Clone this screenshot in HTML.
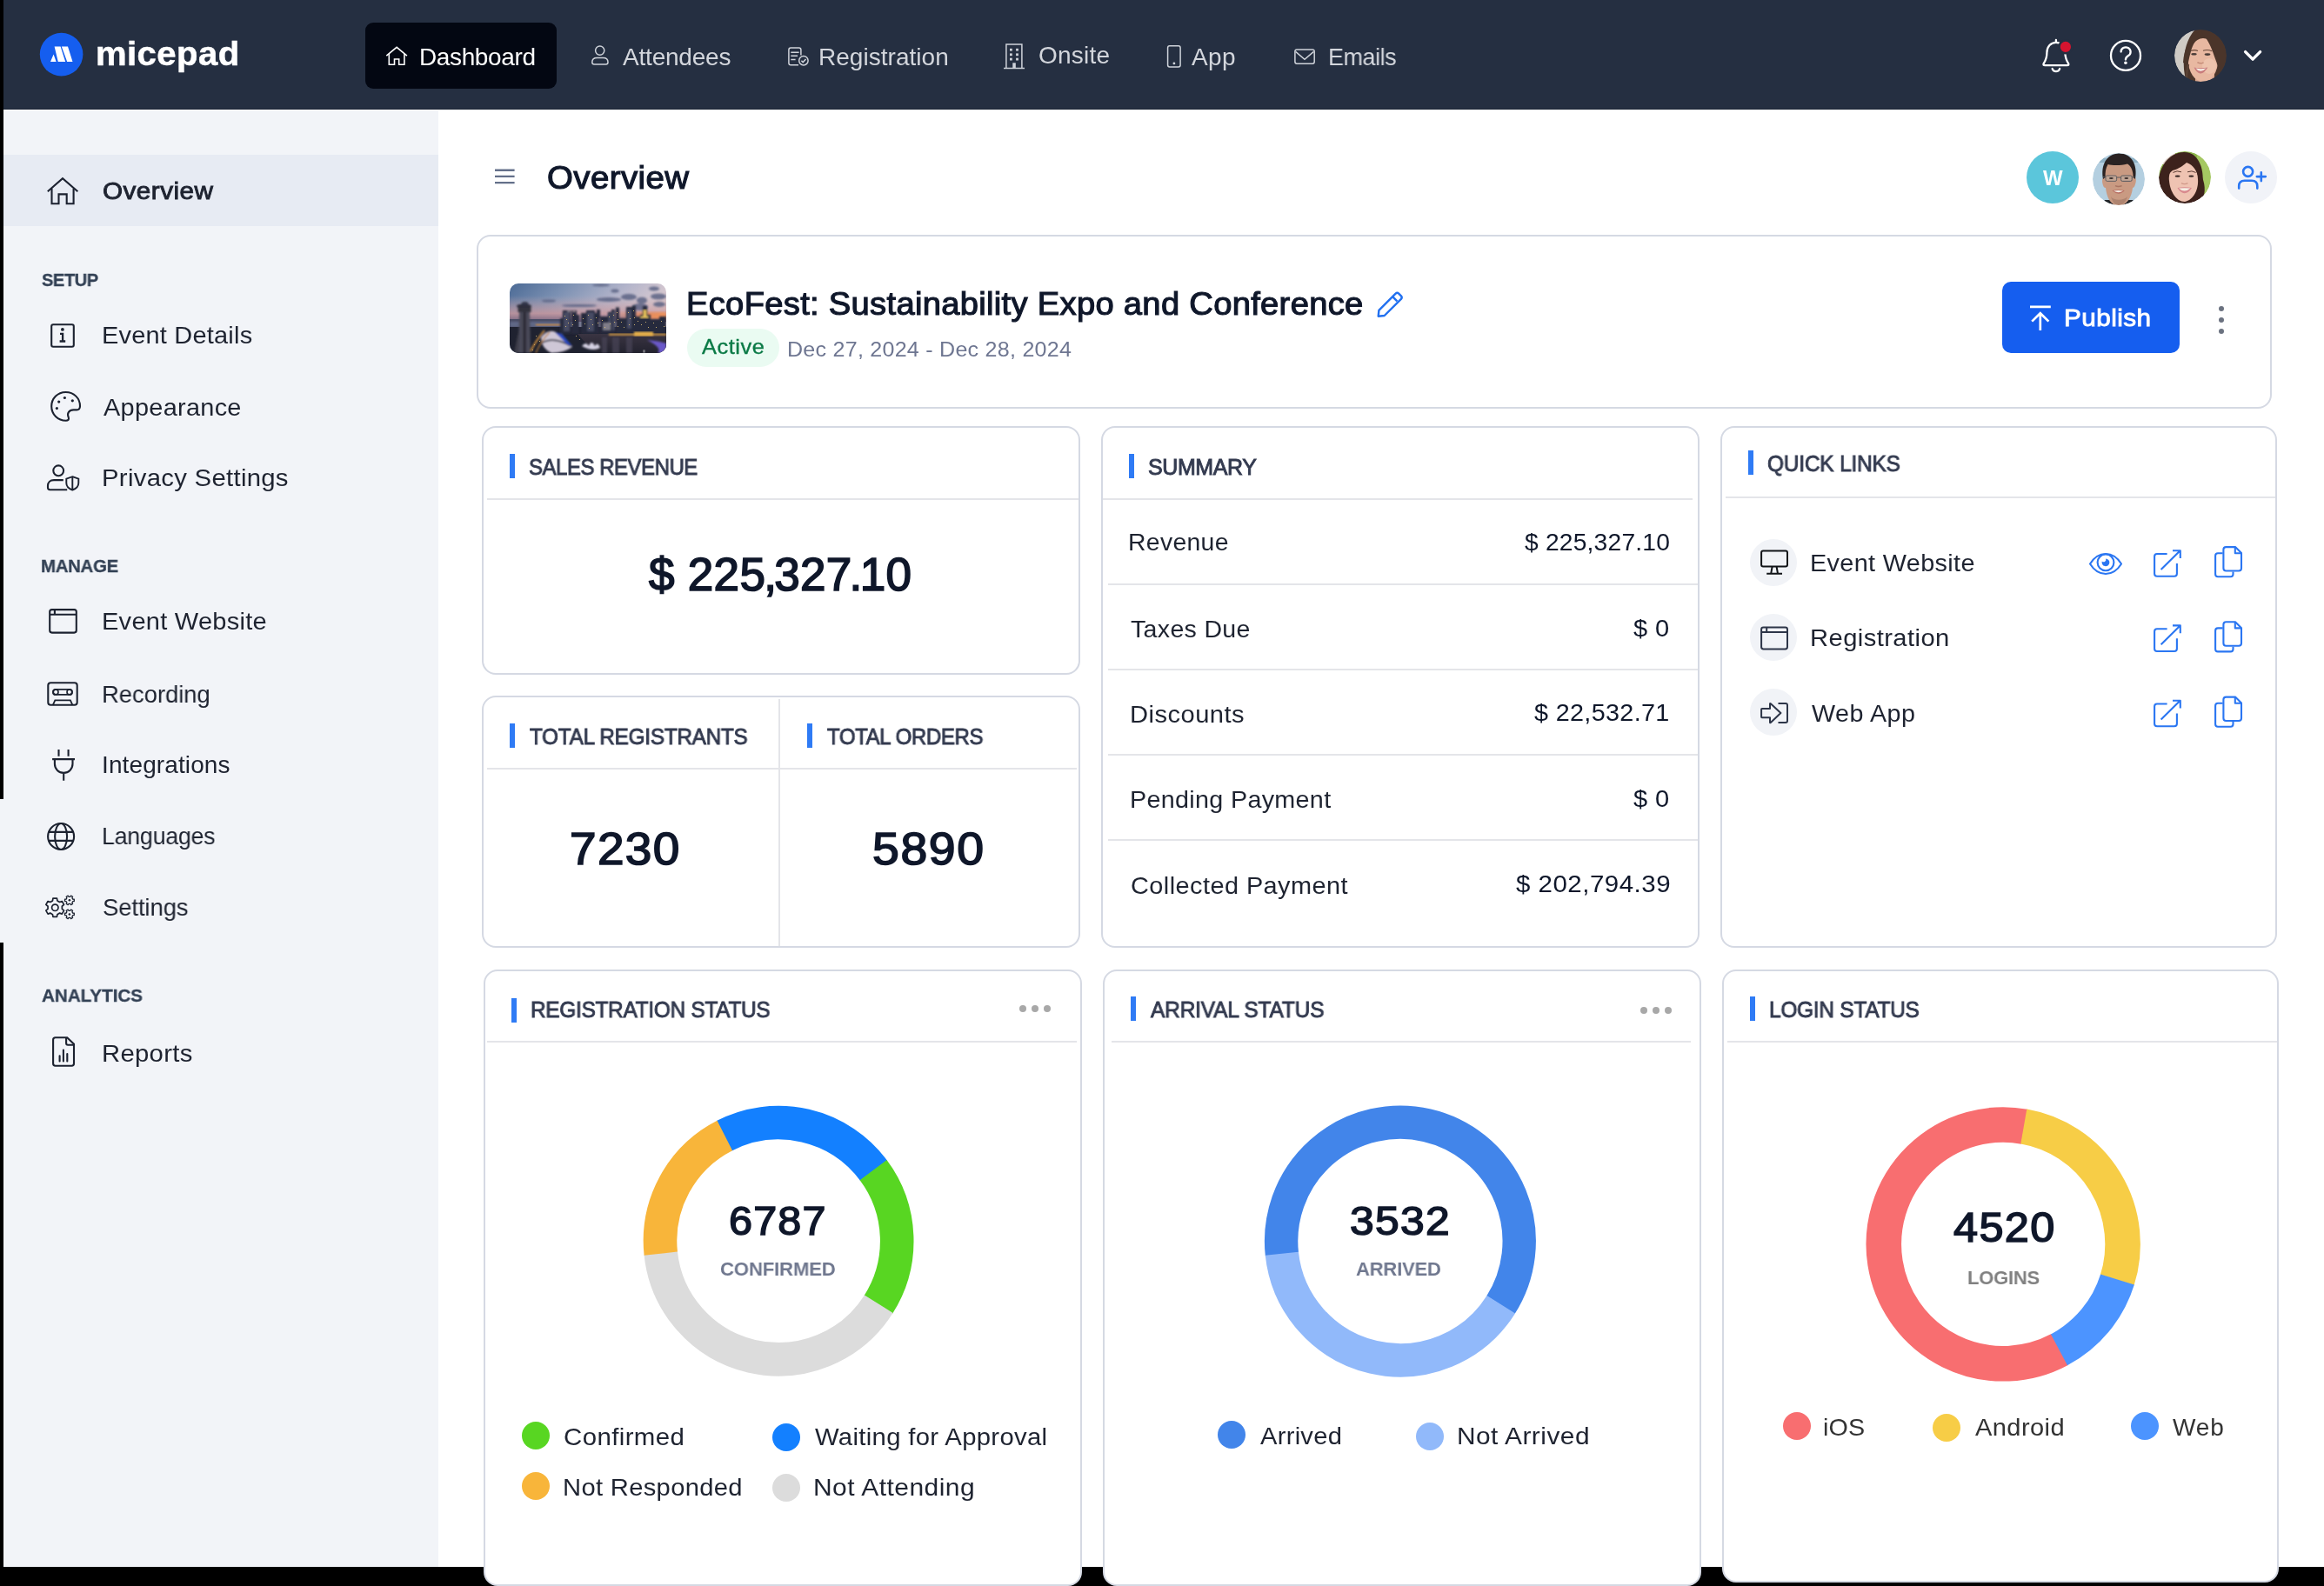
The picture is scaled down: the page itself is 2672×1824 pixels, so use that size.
<!DOCTYPE html>
<html lang="en"><head><meta charset="utf-8">
<title>Micepad - Overview</title>
<style>

html,body{margin:0;padding:0;background:#000;}
body{width:2672px;height:1824px;font-family:"Liberation Sans",sans-serif;}
#page{position:relative;width:2672px;height:1824px;overflow:hidden;background:#000;}
#page header,#page aside,#page main{position:absolute;left:0;top:0;width:2672px;height:1824px;display:block;}
#page div,#page span,#page svg{position:absolute;box-sizing:border-box;}
.t{white-space:nowrap;line-height:1;display:block;font-family:"Liberation Sans",sans-serif;will-change:transform;}
#page .t span{position:static;}
.card{background:#fff;border:2px solid #d5d9e3;border-radius:16px;}
.hr{background:#e4e5e9;height:2px;}
.vr{background:#e4e5e9;width:2px;}
.bar{background:#2f7bf5;width:6px;height:28px;}
.dot{border-radius:50%;width:32px;height:32px;}
.md{border-radius:50%;width:8px;height:8px;background:#a8a8a8;}
.kd{border-radius:50%;width:6px;height:6px;background:#6b7280;}
.qc{border-radius:50%;width:54px;height:54px;background:#f1f3f7;}
</style></head>
<body>
<div id="page">
<!-- page surfaces -->
<div style="left:4px;top:0px;width:2668px;height:1802px;background:#fff;"></div>
<div style="left:4px;top:127px;width:500px;height:1675px;background:#f2f4f8;"></div>
<div style="left:0px;top:919px;width:4px;height:165px;background:#f2f4f8;"></div>
<header>
<div style="left:4px;top:0px;width:2668px;height:126px;background:#252f41;border-bottom:1px solid #1a2334;"></div>
<div style="left:420px;top:26px;width:220px;height:76px;background:#030712;border-radius:9px;"></div>
<svg width="2672" height="1824" viewBox="0 0 2672 1824" style="left:0;top:0" aria-label="icons">
<g id="logo"><circle cx="70.6" cy="62.6" r="24.8" fill="#155eef"/>
<path d="M58,71.1 L61.6,62.4 L64.6,71.1 Z M62.6,53.4 H69.6 L75.2,71.1 H66.8 Z M70.8,53.4 H78 L83.5,71.1 H77.2 Z" fill="#fff"/></g>
<g fill="none" stroke="#fff" stroke-width="1.6">
<path d="M444.3,64.2 L456.1,54.4 L467.9,64.2"/><path d="M447.3,62 V74.2 H453.5 V68 H458.7 V74.2 H464.9 V62"/></g>
<g fill="none" stroke="#cfd3da" stroke-width="1.5">
<circle cx="689.7" cy="58.1" r="5.1"/>
<path d="M680.8,71.6 Q680.8,66.4 686.4,66.4 H693.4 Q699,66.4 699,71.6 Q699,74.1 696.6,74.1 H683.2 Q680.8,74.1 680.8,71.6 Z"/>
<path d="M918,74.7 H909.2 Q906.9,74.7 906.9,72.4 V57.3 Q906.9,55 909.2,55 H918.6 Q920.9,55 920.9,57.3 V63.6"/>
<path d="M909.3,60.2 H918.6 M909.3,64.3 H917 M909.3,68.4 H914.6"/>
<circle cx="923.9" cy="69.7" r="5.2"/><path d="M921.4,69.8 L923.2,71.6 L926.5,68"/>
<path d="M1156.9,78.4 V51 H1174.9 V78.4 M1154,78.6 H1178"/>
</g>
<g fill="#cfd3da">
<rect x="1161.0" y="55.8" width="2.8" height="2.8"/>
<rect x="1161.0" y="61.4" width="2.8" height="2.8"/>
<rect x="1161.0" y="66.7" width="2.8" height="2.8"/>
<rect x="1168.1" y="55.8" width="2.8" height="2.8"/>
<rect x="1168.1" y="61.4" width="2.8" height="2.8"/>
<rect x="1168.1" y="66.7" width="2.8" height="2.8"/>
<rect x="1164.3" y="72.3" width="3.5" height="6"/>
<circle cx="1349.9" cy="72.9" r="1.4"/></g>
<g fill="none" stroke="#cfd3da" stroke-width="1.5">
<rect x="1342.6" y="52.8" width="14.5" height="24.2" rx="2.2"/>
<rect x="1488.9" y="56.9" width="22.3" height="16.3" rx="2.2"/><path d="M1489.6,59.4 L1500,68.2 L1510.4,59.4"/>
</g>
<g fill="none" stroke="#fff" stroke-width="2.3" stroke-linecap="round" stroke-linejoin="round">
<path d="M2363.9,46 V48.6"/>
<path d="M2351.2,75.2 Q2348.6,75.2 2349.8,72.9 C2352.6,68.5 2353.4,66 2353.4,60.5 C2353.4,53.4 2358,48.8 2363.9,48.8 C2369.8,48.8 2374.4,53.4 2374.4,60.5 C2374.4,66 2375.2,68.5 2378,72.9 Q2379.2,75.2 2376.6,75.2 Z"/>
<path d="M2359.6,79 A4.5,4.5 0 0 0 2368.2,79"/>
<circle cx="2444" cy="63.9" r="17"/>
<path d="M2438.6,59.6 A5.5,5.2 0 1 1 2447,64 C2445,65.3 2443.9,66.4 2443.9,68.6"/>
</g>
<circle cx="2374.9" cy="53.9" r="7.4" fill="#d6142f" stroke="#252f41" stroke-width="2.6"/>
<circle cx="2443.9" cy="72.3" r="1.8" fill="#fff"/>
<path d="M2581.6,59.6 L2590.1,68.1 L2598.6,59.6" fill="none" stroke="#fff" stroke-width="3.4" stroke-linecap="round" stroke-linejoin="round"/>
</svg>
<svg width="60" height="60" viewBox="0 0 60 60" style="left:2499.9px;top:34.0px;border-radius:50%;overflow:hidden" aria-label="avatar u"><defs><filter id="fu" x="-20%" y="-20%" width="140%" height="140%"><feGaussianBlur stdDeviation="0.55"/></filter><clipPath id="cu"><circle cx="30" cy="30" r="30"/></clipPath></defs><g clip-path="url(#cu)"><g filter="url(#fu)"><rect x="-5" y="-5" width="70" height="70" fill="#cfcbc5"/><path d="M28,-4 C18,4 12,18 11,34 C10,46 12,56 16,66 L66,66 L66,-4 Z" fill="#4b362b"/><rect x="24" y="48" width="22" height="20" fill="#d9a78f"/><ellipse cx="33" cy="35" rx="17.2" ry="25" fill="#e8b8a1"/><ellipse cx="40" cy="42" rx="8" ry="9" fill="#f0c7b2" opacity="0.7"/><path d="M33,6 C26,9 21,16 18.5,27 C17,32 16.5,36 15,41 L10,38 C11,22 18,8 30,1 Z" fill="#4b362b"/><path d="M33,6 C39,12 43,22 46,31 C48.5,38 50.5,42 50.5,48 C50,54 47,59 43,64 L66,66 L66,-4 L28,-4 Z" fill="#4b362b"/><path d="M16,40 C14,48 13,56 15,64" stroke="#5a4234" stroke-width="2.4" fill="none"/><ellipse cx="22.5" cy="28.3" rx="3.2" ry="1.3" fill="#4a3c38"/><ellipse cx="38" cy="28.6" rx="3.4" ry="1.3" fill="#4a3c38"/><path d="M18.6,24.6 Q23,22.8 27,24.4" stroke="#6a4a3c" stroke-width="1.1" fill="none"/><path d="M33,24.2 Q38,22.4 43.4,24.8" stroke="#6a4a3c" stroke-width="1.1" fill="none"/><path d="M26.4,37.6 Q30,39.8 33.6,37.8" stroke="#c48c78" stroke-width="1.5" fill="none"/><path d="M22.6,43.4 Q30,45 38.4,43.6 Q34,51 29.5,50.4 Q25.4,49.8 22.6,43.4 Z" fill="#c97c7c"/><path d="M24.4,44.4 Q30,45.8 36.6,44.6 Q33,48 30,47.8 Q27,47.6 24.4,44.4 Z" fill="#f6efe8"/></g></g></svg>
<span class="t" style="left:110.00px;top:42.19px;font-size:39px;font-weight:700;color:#ffffff;letter-spacing:0.422px;-webkit-text-stroke:0.5px #ffffff;transform:scale(1.0270,1.0000);transform-origin:0 33.01px;">micepad</span>
<span class="t" style="left:482.00px;top:51.60px;font-size:28px;font-weight:400;color:#ffffff;letter-spacing:-0.373px;">Dashboard</span>
<span class="t" style="left:715.80px;top:51.60px;font-size:28px;font-weight:400;color:#d3d6dc;letter-spacing:-0.202px;">Attendees</span>
<span class="t" style="left:940.80px;top:51.60px;font-size:28px;font-weight:400;color:#d3d6dc;letter-spacing:0.036px;">Registration</span>
<span class="t" style="left:1193.60px;top:50.10px;font-size:28px;font-weight:400;color:#d3d6dc;letter-spacing:0.240px;">Onsite</span>
<span class="t" style="left:1370.20px;top:51.60px;font-size:28px;font-weight:400;color:#d3d6dc;letter-spacing:0.400px;">App</span>
<span class="t" style="left:1527.00px;top:51.60px;font-size:28px;font-weight:400;color:#d3d6dc;letter-spacing:-0.456px;transform:scale(0.9615,1.0000);transform-origin:0 23.70px;">Emails</span>
</header>
<aside>
<div style="left:4px;top:178px;width:500px;height:82px;background:#e7ebf3;"></div>
<svg width="2672" height="1824" viewBox="0 0 2672 1824" style="left:0;top:0" aria-label="sidebar icons">
<g fill="none" stroke="#1c2230" stroke-width="2.1">
<path d="M54.8,220.2 L72,205.2 L89.4,220.2"/><path d="M59.5,217 V234.2 H67.5 V223.4 H76.7 V234.2 H84.6 V217"/>
<rect x="59.2" y="373.2" width="25.6" height="25.6" rx="2"/>
<path d="M69,383.9 H72.1 V392.5 M68.6,392.5 H75.2" stroke-width="2.3"/>
<path d="M75.6,451 C66,451 59.2,458.4 59.2,467.3 C59.2,476.6 66.5,483.8 75.8,483.8 C78.4,483.8 79.6,482.2 78.8,480.2 C77.8,477.8 77.4,476.2 78.8,474.2 C80.2,472.2 82,471.4 84.6,471.4 H88.2 C90.8,471.4 92,469.8 92,467 C92,458 85,451 75.6,451 Z"/>
<circle cx="67.2" cy="541.3" r="5.9"/>
<path d="M72.8,552.1 H62 C57.6,552.1 55,554.8 55,558.6 V560.8 C55,562.4 55.8,563.2 57.4,563.2 H77.2"/>
<path d="M83.3,548.2 L90.3,550.7 V555.4 C90.3,559.4 87.6,561.9 83.3,563.5 C79,561.9 76.3,559.4 76.3,555.4 V550.7 Z M83.3,548.2 V563.5" stroke-width="1.9"/>
<rect x="57.2" y="701.1" width="30.6" height="26.5" rx="2.5"/><path d="M57.2,706.8 H87.8 M62.9,701.1 V706.8"/>
<rect x="55.3" y="785.3" width="33.4" height="25.5" rx="3"/>
<rect x="61" y="792.9" width="22" height="6" rx="3" stroke-width="1.9"/>
<path d="M60.8,810.8 L63.3,805.3 H80.9 L83.4,810.8" stroke-width="1.8"/>
<path d="M67.5,862 V869.8 M78.6,862 V869.8 M60.1,873.1 H86 M62.9,873.1 V878.6 A10.3,10.3 0 0 0 83.5,878.6 V873.1 M73.2,889 V897.8"/>
<circle cx="70.1" cy="962" r="15"/><ellipse cx="70.1" cy="962" rx="7" ry="15"/><path d="M56,956.9 H84.2 M56,966.9 H84.2"/>
<path d="M77.2,1193.2 H63.7 Q61.1,1193.2 61.1,1195.8 V1223 Q61.1,1225.7 63.7,1225.7 H82.4 Q85,1225.7 85,1223 V1200.8 Z"/>
<path d="M76.1,1193.2 V1199.8 Q76.1,1201.8 78.1,1201.8 H85"/>
<path d="M68.6,1214.2 V1220.4 M72.9,1207.6 V1220.4 M77.3,1212 V1220.4" stroke-linecap="round"/>
</g>
<g fill="none" stroke="#1c2230" stroke-linejoin="round">
<path d="M60.47,1035.96 L60.93,1033.14 L65.47,1033.14 L65.93,1035.96 L68.62,1037.52 L71.30,1036.51 L73.57,1040.43 L71.35,1042.24 L71.35,1045.36 L73.57,1047.17 L71.30,1051.09 L68.62,1050.08 L65.93,1051.64 L65.47,1054.46 L60.93,1054.46 L60.47,1051.64 L57.78,1050.08 L55.10,1051.09 L52.83,1047.17 L55.05,1045.36 L55.05,1042.24 L52.83,1040.43 L55.10,1036.51 L57.78,1037.52 Z" stroke-width="1.7"/>
<circle cx="63.3" cy="1043.8" r="3.7" stroke-width="1.7"/>
<path d="M83.68,1034.08 L85.28,1034.26 L85.28,1036.54 L83.68,1036.72 L82.93,1038.01 L83.58,1039.49 L81.60,1040.63 L80.65,1039.33 L79.15,1039.33 L78.20,1040.63 L76.22,1039.49 L76.87,1038.01 L76.12,1036.72 L74.52,1036.54 L74.52,1034.26 L76.12,1034.08 L76.87,1032.79 L76.22,1031.31 L78.20,1030.17 L79.15,1031.47 L80.65,1031.47 L81.60,1030.17 L83.58,1031.31 L82.93,1032.79 Z" stroke-width="1.3"/>
<path d="M83.68,1050.08 L85.28,1050.26 L85.28,1052.54 L83.68,1052.72 L82.93,1054.01 L83.58,1055.49 L81.60,1056.63 L80.65,1055.33 L79.15,1055.33 L78.20,1056.63 L76.22,1055.49 L76.87,1054.01 L76.12,1052.72 L74.52,1052.54 L74.52,1050.26 L76.12,1050.08 L76.87,1048.79 L76.22,1047.31 L78.20,1046.17 L79.15,1047.47 L80.65,1047.47 L81.60,1046.17 L83.58,1047.31 L82.93,1048.79 Z" stroke-width="1.3"/>
</g>
<g fill="#1c2230">
<circle cx="71.9" cy="378.9" r="1.9"/>
<circle cx="74.4" cy="457.5" r="1.6"/>
<circle cx="67.7" cy="462.1" r="1.6"/>
<circle cx="83.3" cy="460.8" r="1.6"/>
<circle cx="65.4" cy="469.6" r="1.6"/>
<circle cx="79.9" cy="1035.3" r="1.3"/>
<circle cx="79.9" cy="1051.5" r="1.3"/>
</g>
<g fill="none" stroke="#1c2230" stroke-width="1.6"><circle cx="64.1" cy="795.9" r="2.9"/><circle cx="79.9" cy="795.9" r="2.9"/></g>
</svg>
<span class="t" style="left:118.20px;top:205.90px;font-size:28px;font-weight:400;color:#1e2330;letter-spacing:0.458px;-webkit-text-stroke:0.9px #1e2330;transform:scale(1.0594,1.0000);transform-origin:0 23.70px;">Overview</span>
<span class="t" style="left:48.20px;top:310.52px;font-size:21px;font-weight:700;color:#334155;letter-spacing:-0.420px;-webkit-text-stroke:0.3px #334155;transform:scale(0.9545,1.0000);transform-origin:0 17.78px;">SETUP</span>
<span class="t" style="left:117.20px;top:372.30px;font-size:28px;font-weight:400;color:#1e2330;letter-spacing:0.209px;transform:scale(1.0337,1.0000);transform-origin:0 23.70px;">Event Details</span>
<span class="t" style="left:119.20px;top:454.70px;font-size:28px;font-weight:400;color:#1e2330;letter-spacing:0.279px;transform:scale(1.0321,1.0000);transform-origin:0 23.70px;">Appearance</span>
<span class="t" style="left:117.20px;top:535.80px;font-size:28px;font-weight:400;color:#1e2330;letter-spacing:0.294px;transform:scale(1.0456,1.0000);transform-origin:0 23.70px;">Privacy Settings</span>
<span class="t" style="left:47.20px;top:639.82px;font-size:21px;font-weight:700;color:#334155;letter-spacing:-0.328px;-webkit-text-stroke:0.3px #334155;transform:scale(0.9724,1.0000);transform-origin:0 17.78px;">MANAGE</span>
<span class="t" style="left:117.20px;top:701.30px;font-size:28px;font-weight:400;color:#1e2330;letter-spacing:0.258px;transform:scale(1.0360,1.0000);transform-origin:0 23.70px;">Event Website</span>
<span class="t" style="left:117.20px;top:784.50px;font-size:28px;font-weight:400;color:#1e2330;letter-spacing:-0.101px;transform:scale(0.9832,1.0000);transform-origin:0 23.70px;">Recording</span>
<span class="t" style="left:117.20px;top:866.30px;font-size:28px;font-weight:400;color:#1e2330;letter-spacing:0.110px;">Integrations</span>
<span class="t" style="left:117.20px;top:948.00px;font-size:28px;font-weight:400;color:#1e2330;letter-spacing:-0.287px;transform:scale(0.9579,1.0000);transform-origin:0 23.70px;">Languages</span>
<span class="t" style="left:118.20px;top:1030.30px;font-size:28px;font-weight:400;color:#1e2330;letter-spacing:-0.115px;transform:scale(0.9823,1.0000);transform-origin:0 23.70px;">Settings</span>
<span class="t" style="left:48.40px;top:1134.22px;font-size:21px;font-weight:700;color:#334155;letter-spacing:-0.077px;-webkit-text-stroke:0.3px #334155;transform:scale(0.9868,1.0000);transform-origin:0 17.78px;">ANALYTICS</span>
<span class="t" style="left:116.80px;top:1198.30px;font-size:28px;font-weight:400;color:#1e2330;letter-spacing:0.287px;transform:scale(1.0458,1.0000);transform-origin:0 23.70px;">Reports</span>
</aside>
<main>
<div style="left:2330px;top:173.8px;width:60px;height:60px;background:#5bc6db;border-radius:50%;"></div>
<div style="left:2558px;top:173.8px;width:60px;height:60px;background:#f1f3f8;border-radius:50%;"></div>
<!-- cards -->
<div class="card" style="left:548px;top:270px;width:2064px;height:199.5px;border-radius:16px;"></div>
<div class="card" style="left:554px;top:490px;width:688px;height:285.5px;"></div>
<div class="card" style="left:554px;top:800px;width:688px;height:289.5px;"></div>
<div class="card" style="left:1266px;top:490px;width:688px;height:599.5px;"></div>
<div class="card" style="left:1978px;top:490px;width:640px;height:599.5px;"></div>
<div class="card" style="left:556px;top:1114.5px;width:688px;height:709px;"></div>
<div class="card" style="left:1268px;top:1114.5px;width:688px;height:709px;"></div>
<div class="card" style="left:1980px;top:1114.5px;width:640px;height:705.5px;"></div>
<!-- dividers -->
<div class="hr" style="left:560px;top:573px;width:680px;"></div>
<div class="hr" style="left:560px;top:883px;width:678px;"></div>
<div class="vr" style="left:895px;top:804px;height:284px;"></div>
<div class="hr" style="left:1268px;top:573px;width:678px;"></div>
<div class="hr" style="left:1274px;top:671px;width:678px;"></div>
<div class="hr" style="left:1274px;top:769px;width:678px;"></div>
<div class="hr" style="left:1274px;top:867.3px;width:678px;"></div>
<div class="hr" style="left:1274px;top:965px;width:678px;"></div>
<div class="hr" style="left:1984px;top:570.7px;width:632px;"></div>
<div class="hr" style="left:560px;top:1197px;width:678px;"></div>
<div class="hr" style="left:1278px;top:1197px;width:666px;"></div>
<div class="hr" style="left:1986px;top:1197px;width:632px;"></div>
<!-- title bars -->
<div class="bar" style="left:586px;top:522px;"></div>
<div class="bar" style="left:586px;top:832px;"></div>
<div class="bar" style="left:928px;top:832px;"></div>
<div class="bar" style="left:1298px;top:522px;"></div>
<div class="bar" style="left:2010px;top:518px;"></div>
<div class="bar" style="left:588px;top:1148px;"></div>
<div class="bar" style="left:1300px;top:1146px;"></div>
<div class="bar" style="left:2012px;top:1146px;"></div>
<!-- badge / buttons -->
<div style="left:790px;top:378px;width:106px;height:43.6px;background:#eafbf2;border-radius:22px;"></div>
<div style="left:2302px;top:324px;width:204px;height:82px;background:#155eef;border-radius:10px;"></div>
<div class="kd" style="left:2551.4px;top:351.7px;"></div>
<div class="kd" style="left:2551.4px;top:364.9px;"></div>
<div class="kd" style="left:2551.4px;top:378.2px;"></div>
<div class="md" style="left:1171.7px;top:1156.4px;"></div>
<div class="md" style="left:1186px;top:1156.4px;"></div>
<div class="md" style="left:1199.9px;top:1156.4px;"></div>
<div class="md" style="left:1885.7px;top:1157.6px;"></div>
<div class="md" style="left:1899.7px;top:1157.6px;"></div>
<div class="md" style="left:1913.9px;top:1157.6px;"></div>
<div class="qc" style="left:2012px;top:620px;"></div>
<div class="qc" style="left:2012px;top:706px;"></div>
<div class="qc" style="left:2012px;top:792.3px;"></div>
<!-- legend dots -->
<div class="dot" style="left:600px;top:1634.7px;background:#58d622;"></div>
<div class="dot" style="left:888px;top:1636.7px;background:#1380ff;"></div>
<div class="dot" style="left:600px;top:1692.8px;background:#f8b53a;"></div>
<div class="dot" style="left:888px;top:1694.8px;background:#dcdcdc;"></div>
<div class="dot" style="left:1400px;top:1634px;background:#4285ea;"></div>
<div class="dot" style="left:1628px;top:1636px;background:#91b9fa;"></div>
<div class="dot" style="left:2050px;top:1624px;background:#f86e70;"></div>
<div class="dot" style="left:2222px;top:1626px;background:#f7cd46;"></div>
<div class="dot" style="left:2450px;top:1624px;background:#4c94ff;"></div>
<svg width="180" height="80" viewBox="0 0 180 80" style="left:586px;top:326px;border-radius:10px;overflow:hidden" aria-label="event photo"><defs><linearGradient id="sky" x1="0" y1="0" x2="1" y2="0.5"><stop offset="0" stop-color="#4b6a95"/><stop offset="0.3" stop-color="#7b90b2"/><stop offset="0.62" stop-color="#b4b5cb"/><stop offset="0.85" stop-color="#d6c8d0"/><stop offset="1" stop-color="#e2cfcc"/></linearGradient><linearGradient id="hor" x1="0" y1="0" x2="0" y2="1"><stop offset="0" stop-color="#c9a9b0" stop-opacity="0"/><stop offset="0.68" stop-color="#c9959a" stop-opacity="0.8"/><stop offset="1" stop-color="#72607c" stop-opacity="0.95"/></linearGradient><linearGradient id="glow" x1="0" y1="0" x2="1" y2="0"><stop offset="0" stop-color="#e08a5a" stop-opacity="0"/><stop offset="0.6" stop-color="#e58a58" stop-opacity="0.9"/><stop offset="1" stop-color="#f0935a"/></linearGradient><linearGradient id="water" x1="0" y1="0" x2="0" y2="1"><stop offset="0" stop-color="#3a3442"/><stop offset="1" stop-color="#23232f"/></linearGradient><filter id="b1" x="-10%" y="-10%" width="120%" height="120%"><feGaussianBlur stdDeviation="0.9"/></filter><filter id="b2" x="-10%" y="-10%" width="120%" height="120%"><feGaussianBlur stdDeviation="1.8"/></filter></defs><rect width="180" height="80" fill="url(#sky)"/><rect y="14" width="180" height="30" fill="url(#hor)"/><rect x="120" y="33" width="60" height="9" fill="url(#glow)" filter="url(#b2)"/><g fill="#5b6384" opacity="0.85" filter="url(#b1)"><ellipse cx="121" cy="8.5" rx="4.5" ry="2"/><ellipse cx="137" cy="15.5" rx="9" ry="3.6"/><ellipse cx="114" cy="18.5" rx="14" ry="2.4"/><ellipse cx="152" cy="19.5" rx="6" ry="3.8"/><ellipse cx="166" cy="6" rx="6" ry="2.4"/><ellipse cx="171" cy="15" rx="9" ry="3.4"/><ellipse cx="150" cy="27" rx="9" ry="4"/><ellipse cx="172" cy="24" rx="7" ry="3"/><ellipse cx="80" cy="25.5" rx="20" ry="1.6"/><ellipse cx="45" cy="20" rx="8" ry="1.6"/><ellipse cx="105" cy="2" rx="10" ry="1.4"/></g><rect x="0" y="41" width="70" height="10" fill="#4a4d66"/><rect x="0" y="44" width="60" height="6" fill="#606785" filter="url(#b1)"/><rect x="30" y="46.5" width="30" height="2" fill="#c98a48" filter="url(#b1)"/><rect x="0" y="50" width="180" height="30" fill="#1f2230"/><g fill="#262a3c" filter="url(#b1)"><rect x="58" y="40" width="4" height="20"/><rect x="61" y="31" width="9" height="27"/><rect x="71" y="31" width="6" height="27"/><rect x="76" y="36" width="4" height="22"/><rect x="82" y="34" width="6" height="24"/><rect x="88" y="31" width="10" height="27"/><rect x="98" y="34" width="5" height="24"/><rect x="100" y="30" width="4" height="10"/><rect x="104" y="38" width="9" height="20"/><rect x="113" y="33" width="4" height="25"/><rect x="117" y="30" width="4" height="28"/><rect x="122" y="27.5" width="4" height="30"/><rect x="126" y="40" width="8" height="18"/><rect x="134" y="27" width="7" height="31"/><rect x="141" y="25.5" width="4" height="32"/><rect x="145" y="38" width="8" height="20"/><rect x="153" y="26" width="5" height="14"/><rect x="150" y="36" width="12" height="22"/><rect x="162" y="41" width="10" height="17"/><rect x="172" y="38" width="8" height="20"/></g><g fill="#4c5068" opacity="0.9" filter="url(#b1)"><rect x="62" y="33" width="7" height="22"/><rect x="89" y="33" width="8" height="22"/><rect x="113.5" y="34" width="3" height="20"/><rect x="118" y="32" width="2.6" height="22"/><rect x="135" y="30" width="5" height="22"/><rect x="107" y="45" width="9" height="9" fill="#8a8792"/></g><g fill="#e9c25a" filter="url(#b1)"><rect x="153.4" y="30" width="4.2" height="8"/><rect x="150" y="37.6" width="10" height="2.4"/><rect x="66.5" y="31.4" width="2.5" height="1.3" fill="#f0e6e6"/><rect x="72.5" y="31.4" width="3" height="1.3" fill="#f0d0d0"/></g><g fill="#e8c878" opacity="0.85"><rect x="63" y="37" width="1" height="1"/><rect x="65" y="41" width="1" height="1"/><rect x="67" y="45" width="1" height="1"/><rect x="64" y="49" width="1" height="1"/><rect x="73" y="36" width="1" height="1"/><rect x="75" y="42" width="1" height="1"/><rect x="72" y="47" width="1" height="1"/><rect x="84" y="40" width="1" height="1"/><rect x="86" y="46" width="1" height="1"/><rect x="90" y="36" width="1" height="1"/><rect x="93" y="41" width="1" height="1"/><rect x="95" y="47" width="1" height="1"/><rect x="91" y="51" width="1" height="1"/><rect x="99" y="39" width="1" height="1"/><rect x="101" y="45" width="1" height="1"/><rect x="106" y="42" width="1" height="1"/><rect x="109" y="50" width="1" height="1"/><rect x="114" y="38" width="1" height="1"/><rect x="115" y="46" width="1" height="1"/><rect x="119" y="36" width="1" height="1"/><rect x="120" y="44" width="1" height="1"/><rect x="123" y="33" width="1" height="1"/><rect x="124" y="41" width="1" height="1"/><rect x="124" y="49" width="1" height="1"/><rect x="128" y="44" width="1" height="1"/><rect x="131" y="50" width="1" height="1"/><rect x="136" y="33" width="1" height="1"/><rect x="138" y="40" width="1" height="1"/><rect x="137" y="47" width="1" height="1"/><rect x="142" y="31" width="1" height="1"/><rect x="143" y="39" width="1" height="1"/><rect x="143" y="47" width="1" height="1"/><rect x="147" y="43" width="1" height="1"/><rect x="151" y="47" width="1" height="1"/><rect x="156" y="44" width="1" height="1"/><rect x="159" y="50" width="1" height="1"/><rect x="165" y="45" width="1" height="1"/><rect x="168" y="50" width="1" height="1"/><rect x="174" y="43" width="1" height="1"/><rect x="177" y="49" width="1" height="1"/><rect x="30" y="60" width="1" height="1"/><rect x="34" y="66" width="1" height="1"/><rect x="28" y="70" width="1" height="1"/><rect x="44" y="58" width="1" height="1"/><rect x="26" y="76" width="1" height="1"/><rect x="76" y="60" width="1" height="1"/><rect x="80" y="64" width="1" height="1"/><rect x="110" y="60" width="1" height="1"/><rect x="126" y="59" width="1" height="1"/><rect x="150" y="60" width="1" height="1"/><rect x="170" y="61" width="1" height="1"/></g><path d="M78,58 H180 V80 H100 Q90,72 78,58 Z" fill="url(#water)"/><rect x="114" y="57.5" width="66" height="2.4" fill="#d19a45" opacity="0.9" filter="url(#b1)"/><rect x="143" y="55.5" width="22" height="5" fill="#e3ad4c" filter="url(#b1)"/><path d="M158,65 Q172,66 180,69 V80 H170 Q176,74 158,65 Z" fill="#6a58c8" filter="url(#b1)"/><g fill="#4a4458" opacity="0.7" filter="url(#b1)"><rect x="106" y="62" width="6" height="18"/><rect x="118" y="62" width="8" height="18"/><rect x="134" y="62" width="7" height="18"/></g><g filter="url(#b1)"><path d="M10,80 L11,32 H23 L24,80 Z" fill="#4a4a58"/><rect x="15.5" y="32" width="3.4" height="48" fill="#2b2a36"/><ellipse cx="16.5" cy="26" rx="8.6" ry="2.4" fill="#2a2c3a"/><ellipse cx="17.5" cy="23" rx="4" ry="2" fill="#30364a"/><rect x="9.5" y="27" width="15" height="6" fill="#33323e"/><path d="M5,80 L10,56 V80 Z" fill="#3d3d4a"/></g><g filter="url(#b1)"><path d="M36,62 Q44,52 53,56 L72,73 Q62,80 48,80 Q36,74 36,62 Z" fill="#cfc7d6"/><path d="M36,69 Q50,60 70,72" stroke="#2a2c3c" stroke-width="1.6" fill="none"/><path d="M52,56 L60,58 L72,72 L66,70 Z" fill="#2a48c0"/><path d="M83,72 Q88,66 91,72 Q94,64 98,72 Q101,66 104,74 Q95,79 83,72 Z" fill="#d6d2e4"/><path d="M24,78 Q30,66 40,54" stroke="#d9953e" stroke-width="1.8" fill="none"/><path d="M30,80 Q36,66 46,56" stroke="#b87c36" stroke-width="1.2" fill="none"/></g><circle cx="154.5" cy="78" r="1.2" fill="#fff" filter="url(#b1)"/></svg>
<svg width="60" height="60" viewBox="0 0 60 60" style="left:2406.0px;top:175.9px;border-radius:50%;overflow:hidden" aria-label="avatar m"><defs><filter id="fm" x="-20%" y="-20%" width="140%" height="140%"><feGaussianBlur stdDeviation="0.55"/></filter><clipPath id="cm"><circle cx="30" cy="30" r="30"/></clipPath></defs><g clip-path="url(#cm)"><g filter="url(#fm)"><rect x="-5" y="-5" width="70" height="70" fill="#b4cfe0"/><rect x="-5" y="6" width="70" height="5" fill="#8fb2c6"/><path d="M8,66 L14,54 L46,54 L54,66 Z" fill="#22252c"/><path d="M13,28 C12,14 20,6 30,6 C41,6 49,14 48,28 C50,28 50.5,32 49,36 C48,39 47,40 46,40 C45,50 40,60 30,61 C20,60 16,50 15,40 C13,40 12,38 11.4,35 C10.6,31 11.5,28 13,28 Z" fill="#c99a82"/><path d="M12,30 C9,14 16,1 30,0.6 C45,0.4 52,14 49,30 L46.6,28 C46.6,20 44,15 40,12.6 C32,14.6 22,14.4 17.6,13 C15,17 14.4,22 14.6,28 Z" fill="#2b2422"/><path d="M21,50 C24,55 36,55 40,50 C38,57 34,60 30,60 C26,60 23,57 21,50 Z" fill="#a87e6a" opacity="0.8"/><rect x="15" y="26" width="12.6" height="6.4" rx="1.6" fill="#c2a594" stroke="#5a5a5e" stroke-width="0.9"/><rect x="32.6" y="26" width="12.6" height="6.4" rx="1.6" fill="#c2a594" stroke="#5a5a5e" stroke-width="1"/><path d="M27.6,28 H32.6 M12,27.4 L15,28 M45.2,28 L48,27.4" stroke="#5a5a5e" stroke-width="1"/><ellipse cx="21.4" cy="29" rx="2.4" ry="1" fill="#3a2e2c"/><ellipse cx="38.8" cy="29" rx="2.4" ry="1" fill="#3a2e2c"/><path d="M26,37.6 Q29.6,39.4 33.6,37.6" stroke="#a87462" stroke-width="1.4" fill="none"/><path d="M22.4,43 Q29.6,41.4 36.8,43 Q33,47 29.6,46.8 Q26,46.6 22.4,43 Z" fill="#b86e62"/><path d="M24,43.4 Q29.6,42.6 35.2,43.4 Q32,45.2 29.6,45.2 Q27,45.2 24,43.4 Z" fill="#f2ebe2"/></g></g></svg>
<svg width="60" height="60" viewBox="0 0 60 60" style="left:2482.1px;top:173.9px;border-radius:50%;overflow:hidden" aria-label="avatar w"><defs><filter id="fw" x="-20%" y="-20%" width="140%" height="140%"><feGaussianBlur stdDeviation="0.55"/></filter><clipPath id="cw"><circle cx="30" cy="30" r="30"/></clipPath></defs><g clip-path="url(#cw)"><g filter="url(#fw)"><rect x="-5" y="-5" width="70" height="70" fill="#8db54c"/><rect x="44" y="-5" width="20" height="70" fill="#a5c862"/><rect x="-5" y="-5" width="24" height="20" fill="#d9c9c0"/><path d="M-2,66 C-4,40 0,16 14,6 C24,-1 36,0 42,6 C50,14 52,28 50,40 C50,52 46,60 40,66 Z" fill="#3e241c"/><path d="M12,34 C11,22 18,12 28,11 C38,11 45,20 45,32 C46,44 40,56 30,58 C20,58 13,46 12,34 Z" fill="#efc3b2"/><path d="M10,30 C10,18 18,8 30,9 C40,10 46,18 46,32 C44,22 40,16 32,13 C28,16 24,20 16,22 C13,24 11,27 10,30 Z" fill="#3e241c"/><path d="M8,36 C8,46 10,54 16,60 L10,62 C4,54 4,44 6,36 Z" fill="#3e241c"/><path d="M47,30 C49,42 46,54 40,62 L48,62 C54,50 54,40 50,30 Z" fill="#3e241c"/><ellipse cx="21.6" cy="28.6" rx="3" ry="1.2" fill="#3a2a28"/><ellipse cx="37.4" cy="28.6" rx="3" ry="1.2" fill="#3a2a28"/><path d="M16.4,24.4 Q21,21.6 26,23.8" stroke="#5a3a30" stroke-width="1" fill="none"/><path d="M33,23.8 Q38,21.6 42.6,24.4" stroke="#5a3a30" stroke-width="1" fill="none"/><path d="M26,36.6 Q29.6,38.6 33.4,36.6" stroke="#d09888" stroke-width="1.4" fill="none"/><path d="M21.4,42 Q29.6,40.6 38,42 Q34,48.4 29.6,48.2 Q25,48 21.4,42 Z" fill="#d98a8e"/><path d="M23,42.6 Q29.6,41.8 36.4,42.6 Q33,45.6 29.6,45.6 Q26,45.6 23,42.6 Z" fill="#f6efe4"/></g></g></svg>
<svg width="2672" height="1824" viewBox="0 0 2672 1824" style="left:0;top:0" aria-label="content icons">
<path d="M569,195.7 H591.6 M569,202.9 H591.6 M569,210.1 H591.6" stroke="#64708a" stroke-width="2.4" fill="none"/>
<g fill="none" stroke="#2170f0" stroke-width="2.4" stroke-linejoin="round">
<path d="M1585.4,356.8 L1604.6,337.6 Q1606.4,336 1608.2,337.6 L1610.9,340.3 Q1612.5,342.1 1610.9,343.9 L1591.7,363 L1584.7,363.7 Z M1601.6,341.6 L1606.3,346.3"/></g>
<path d="M2334,352.9 H2357.8 M2345.8,380 V361 M2336.2,369.6 L2345.8,360.2 L2355.4,369.6" fill="none" stroke="#fff" stroke-width="2.7"/>
<g fill="none" stroke="#2a76f2" stroke-width="2.6" stroke-linecap="round">
<circle cx="2584.6" cy="197.4" r="5.5"/><path d="M2574.2,216.6 V214 Q2574.2,207.8 2580.6,207.8 H2589 Q2595.3,207.8 2595.3,214 V216.6"/>
<path d="M2594.8,203.1 H2604.8 M2599.8,198.2 V208.1"/></g>
<g fill="none" stroke="#111418" stroke-width="2">
<rect x="2025.1" y="633.4" width="29.9" height="18.2" rx="2"/><path d="M2037.6,651.8 L2036.2,659.6 M2042.6,651.8 L2044,659.6 M2031.2,659.7 H2049"/></g>
<g fill="none" stroke="#2d3548" stroke-width="2">
<rect x="2025.1" y="721.4" width="29.9" height="25.1" rx="2.4"/><path d="M2025.1,727 H2055 M2031.2,721.4 V727"/>
<path d="M2025.1,815.6 Q2025.1,815 2025.8,815 H2035 V809.8 Q2035,808.4 2036.1,809.4 L2047.4,820.1 L2036.1,830.8 Q2035,831.8 2035,830.4 V825.2 H2025.8 Q2025.1,825.2 2025.1,824.6 Z" stroke-linejoin="round"/>
<path d="M2044.5,809 H2053 Q2055,809 2055,811 V829.1 Q2055,831.1 2053,831.1 H2044.5"/></g>
<g fill="none" stroke="#2a76f2" stroke-width="2.1" stroke-linejoin="round">
<g transform="translate(0,0)">
<path d="M2403,648.5 C2408,640.5 2414,637 2421,637 C2428,637 2434,640.5 2439,648.5 C2434,656.5 2428,660 2421,660 C2414,660 2408,656.5 2403,648.5 Z"/>
<circle cx="2421" cy="646.8" r="9.4"/>
<path d="M2421,642.4 a4.4,4.4 0 1 1 -4.2,3 a2.6,2.6 0 0 0 4.2,-3 z" fill="#2a76f2" stroke="none"/>
<path d="M2491.6,637 H2480 Q2477.1,637 2477.1,640 V659.8 Q2477.1,662.8 2480,662.8 H2499.9 Q2502.9,662.8 2502.9,659.8 V648"/>
<path d="M2484.6,655 L2506.6,633.2 M2498,633.2 H2506.8 V642"/>
<path d="M2555.6,636.2 H2550 Q2547.1,636.2 2547.1,639.2 V660.2 Q2547.1,663.2 2550,663.2 H2564.6 Q2567.5,663.2 2567.5,660.2 V657.6"/>
<path d="M2559.4,629.1 H2570 L2577,636 V653.5 Q2577,656.5 2574,656.5 H2559.4 Q2556.4,656.5 2556.4,653.5 V632.1 Q2556.4,629.1 2559.4,629.1 Z"/>
<path d="M2569.8,629.4 V636.2 H2576.8"/>
</g>
<g transform="translate(0,86.2)">
<path d="M2491.6,637 H2480 Q2477.1,637 2477.1,640 V659.8 Q2477.1,662.8 2480,662.8 H2499.9 Q2502.9,662.8 2502.9,659.8 V648"/>
<path d="M2484.6,655 L2506.6,633.2 M2498,633.2 H2506.8 V642"/>
<path d="M2555.6,636.2 H2550 Q2547.1,636.2 2547.1,639.2 V660.2 Q2547.1,663.2 2550,663.2 H2564.6 Q2567.5,663.2 2567.5,660.2 V657.6"/>
<path d="M2559.4,629.1 H2570 L2577,636 V653.5 Q2577,656.5 2574,656.5 H2559.4 Q2556.4,656.5 2556.4,653.5 V632.1 Q2556.4,629.1 2559.4,629.1 Z"/>
<path d="M2569.8,629.4 V636.2 H2576.8"/>
</g>
<g transform="translate(0,172.5)">
<path d="M2491.6,637 H2480 Q2477.1,637 2477.1,640 V659.8 Q2477.1,662.8 2480,662.8 H2499.9 Q2502.9,662.8 2502.9,659.8 V648"/>
<path d="M2484.6,655 L2506.6,633.2 M2498,633.2 H2506.8 V642"/>
<path d="M2555.6,636.2 H2550 Q2547.1,636.2 2547.1,639.2 V660.2 Q2547.1,663.2 2550,663.2 H2564.6 Q2567.5,663.2 2567.5,660.2 V657.6"/>
<path d="M2559.4,629.1 H2570 L2577,636 V653.5 Q2577,656.5 2574,656.5 H2559.4 Q2556.4,656.5 2556.4,653.5 V632.1 Q2556.4,629.1 2559.4,629.1 Z"/>
<path d="M2569.8,629.4 V636.2 H2576.8"/>
</g>
</g>
</svg>
<svg width="2672" height="1824" viewBox="0 0 2672 1824" style="left:0;top:0" aria-label="charts">
<path d="M832.68,1306.26 A136.1,136.1 0 0 1 1004.50,1346.24" fill="none" stroke="#1380ff" stroke-width="38.6"/>
<path d="M1004.08,1345.67 A136.1,136.1 0 0 1 1009.89,1500.33" fill="none" stroke="#58d622" stroke-width="38.6"/>
<path d="M1010.27,1499.72 A136.1,136.1 0 0 1 759.70,1440.95" fill="none" stroke="#dcdcdc" stroke-width="38.6"/>
<path d="M759.77,1441.66 A136.1,136.1 0 0 1 833.31,1305.93" fill="none" stroke="#f8b53a" stroke-width="38.6"/>
<path d="M1473.93,1442.51 A136.8,136.8 0 1 1 1725.40,1500.80" fill="none" stroke="#4285ea" stroke-width="38.4"/>
<path d="M1725.79,1500.20 A136.8,136.8 0 0 1 1473.85,1441.80" fill="none" stroke="#91b9fa" stroke-width="38.4"/>
<path d="M2368.13,1551.99 A137.4,137.4 0 1 1 2327.53,1295.67" fill="none" stroke="#f86e70" stroke-width="40.6"/>
<path d="M2326.82,1295.55 A137.4,137.4 0 0 1 2434.24,1472.22" fill="none" stroke="#f7cd46" stroke-width="40.6"/>
<path d="M2434.46,1471.53 A137.4,137.4 0 0 1 2367.49,1552.33" fill="none" stroke="#4c94ff" stroke-width="40.6"/>
</svg>
<span class="t" style="left:628.60px;top:186.48px;font-size:37px;font-weight:400;color:#0f172a;letter-spacing:0.413px;-webkit-text-stroke:1.15px #0f172a;transform:scale(1.0380,1.0000);transform-origin:0 31.32px;">Overview</span>
<span class="t" style="left:789.00px;top:330.58px;font-size:37px;font-weight:400;color:#0f172a;letter-spacing:0.300px;-webkit-text-stroke:1.15px #0f172a;transform:scale(1.0307,1.0000);transform-origin:0 31.32px;">EcoFest: Sustainability Expo and Conference</span>
<span class="t" style="left:807.20px;top:387.48px;font-size:24px;font-weight:400;color:#0b7a46;letter-spacing:0.529px;-webkit-text-stroke:0.35px #0b7a46;transform:scale(1.0570,1.0000);transform-origin:0 20.32px;">Active</span>
<span class="t" style="left:905.00px;top:390.28px;font-size:24px;font-weight:400;color:#6e7691;letter-spacing:0.244px;transform:scale(1.0436,1.0000);transform-origin:0 20.32px;">Dec 27, 2024 - Dec 28, 2024</span>
<span class="t" style="left:2373.00px;top:352.10px;font-size:28px;font-weight:400;color:#ffffff;letter-spacing:0.439px;-webkit-text-stroke:0.9px #ffffff;transform:scale(1.0599,1.0000);transform-origin:0 23.70px;">Publish</span>
<span class="t" style="left:2349.00px;top:194.03px;font-size:23px;font-weight:700;color:#ffffff;letter-spacing:1.536px;transform:scale(1.0414,1.0000);transform-origin:0 19.47px;">W</span>
<span class="t" style="left:607.80px;top:524.94px;font-size:25px;font-weight:400;color:#343b50;letter-spacing:-0.436px;-webkit-text-stroke:0.9px #343b50;transform:scale(0.9560,1.0000);transform-origin:0 21.16px;">SALES REVENUE</span>
<span class="t" style="left:746.00px;top:634.24px;font-size:53px;font-weight:400;color:#0f172a;letter-spacing:0.309px;-webkit-text-stroke:1.7px #0f172a;">$ 225<span style="margin:0 -3px 0 -2px">,</span>327<span style="margin:0 -3px 0 -3px">.</span>10</span>
<span class="t" style="left:608.80px;top:834.94px;font-size:25px;font-weight:400;color:#343b50;letter-spacing:-0.245px;-webkit-text-stroke:0.9px #343b50;transform:scale(0.9710,1.0000);transform-origin:0 21.16px;">TOTAL REGISTRANTS</span>
<span class="t" style="left:950.60px;top:834.94px;font-size:25px;font-weight:400;color:#343b50;letter-spacing:-0.379px;-webkit-text-stroke:0.9px #343b50;transform:scale(0.9592,1.0000);transform-origin:0 21.16px;">TOTAL ORDERS</span>
<span class="t" style="left:654.60px;top:950.63px;font-size:51px;font-weight:400;color:#0f172a;letter-spacing:1.238px;-webkit-text-stroke:1.6px #0f172a;transform:scale(1.0768,1.0000);transform-origin:0 43.17px;">7230</span>
<span class="t" style="left:1002.80px;top:950.63px;font-size:51px;font-weight:400;color:#0f172a;letter-spacing:1.473px;-webkit-text-stroke:1.6px #0f172a;transform:scale(1.0861,1.0000);transform-origin:0 43.17px;">5890</span>
<span class="t" style="left:1319.60px;top:524.94px;font-size:25px;font-weight:400;color:#343b50;letter-spacing:-0.401px;-webkit-text-stroke:0.9px #343b50;">SUMMARY</span>
<span class="t" style="left:1297.00px;top:610.32px;font-size:27.5px;font-weight:400;color:#1e2330;letter-spacing:0.323px;transform:scale(1.0304,1.0000);transform-origin:0 23.28px;">Revenue</span>
<span class="t" style="left:1752.80px;top:610.32px;font-size:27.5px;font-weight:400;color:#0f172a;letter-spacing:0.196px;transform:scale(1.0256,1.0000);transform-origin:0 23.28px;">$ 225,327.10</span>
<span class="t" style="left:1299.60px;top:710.02px;font-size:27.5px;font-weight:400;color:#1e2330;letter-spacing:0.313px;transform:scale(1.0376,1.0000);transform-origin:0 23.28px;">Taxes Due</span>
<span class="t" style="left:1878.40px;top:708.52px;font-size:27.5px;font-weight:400;color:#0f172a;letter-spacing:0.379px;transform:scale(1.0562,1.0000);transform-origin:0 23.28px;">$ 0</span>
<span class="t" style="left:1299.00px;top:807.82px;font-size:27.5px;font-weight:400;color:#1e2330;letter-spacing:0.450px;transform:scale(1.0589,1.0000);transform-origin:0 23.28px;">Discounts</span>
<span class="t" style="left:1764.40px;top:806.32px;font-size:27.5px;font-weight:400;color:#0f172a;letter-spacing:0.326px;transform:scale(1.0456,1.0000);transform-origin:0 23.28px;">$ 22,532.71</span>
<span class="t" style="left:1299.00px;top:906.32px;font-size:27.5px;font-weight:400;color:#1e2330;letter-spacing:0.315px;transform:scale(1.0435,1.0000);transform-origin:0 23.28px;">Pending Payment</span>
<span class="t" style="left:1878.40px;top:904.72px;font-size:27.5px;font-weight:400;color:#0f172a;letter-spacing:0.379px;transform:scale(1.0562,1.0000);transform-origin:0 23.28px;">$ 0</span>
<span class="t" style="left:1300.00px;top:1004.52px;font-size:27.5px;font-weight:400;color:#1e2330;letter-spacing:0.416px;transform:scale(1.0509,1.0000);transform-origin:0 23.28px;">Collected Payment</span>
<span class="t" style="left:1742.60px;top:1003.02px;font-size:27.5px;font-weight:400;color:#0f172a;letter-spacing:0.475px;transform:scale(1.0711,1.0000);transform-origin:0 23.28px;">$ 202,794.39</span>
<span class="t" style="left:2031.60px;top:521.04px;font-size:25px;font-weight:400;color:#343b50;letter-spacing:-0.165px;-webkit-text-stroke:0.9px #343b50;transform:scale(0.9756,1.0000);transform-origin:0 21.16px;">QUICK LINKS</span>
<span class="t" style="left:2081.20px;top:634.22px;font-size:27.5px;font-weight:400;color:#1e2330;letter-spacing:0.334px;transform:scale(1.0478,1.0000);transform-origin:0 23.28px;">Event Website</span>
<span class="t" style="left:2081.00px;top:720.32px;font-size:27.5px;font-weight:400;color:#1e2330;letter-spacing:0.394px;transform:scale(1.0609,1.0000);transform-origin:0 23.28px;">Registration</span>
<span class="t" style="left:2083.00px;top:806.72px;font-size:27.5px;font-weight:400;color:#1e2330;letter-spacing:0.479px;transform:scale(1.0443,1.0000);transform-origin:0 23.28px;">Web App</span>
<span class="t" style="left:609.60px;top:1148.74px;font-size:25px;font-weight:400;color:#343b50;letter-spacing:-0.241px;-webkit-text-stroke:0.9px #343b50;transform:scale(0.9732,1.0000);transform-origin:0 21.16px;">REGISTRATION STATUS</span>
<span class="t" style="left:1322.80px;top:1149.04px;font-size:25px;font-weight:400;color:#343b50;letter-spacing:-0.173px;-webkit-text-stroke:0.9px #343b50;transform:scale(0.9785,1.0000);transform-origin:0 21.16px;">ARRIVAL STATUS</span>
<span class="t" style="left:2034.00px;top:1149.04px;font-size:25px;font-weight:400;color:#343b50;letter-spacing:-0.241px;-webkit-text-stroke:0.9px #343b50;transform:scale(0.9766,1.0000);transform-origin:0 21.16px;">LOGIN STATUS</span>
<span class="t" style="left:838.40px;top:1381.06px;font-size:46px;font-weight:400;color:#0f172a;letter-spacing:1.137px;-webkit-text-stroke:1.5px #0f172a;transform:scale(1.0546,1.0000);transform-origin:0 38.94px;">6787</span>
<span class="t" style="left:828.20px;top:1448.95px;font-size:22.5px;font-weight:700;color:#70788f;letter-spacing:-0.179px;transform:scale(0.9850,1.0000);transform-origin:0 19.05px;">CONFIRMED</span>
<span class="t" style="left:1552.00px;top:1381.06px;font-size:46px;font-weight:400;color:#0f172a;letter-spacing:1.233px;-webkit-text-stroke:1.5px #0f172a;transform:scale(1.0813,1.0000);transform-origin:0 38.94px;">3532</span>
<span class="t" style="left:1559.20px;top:1448.95px;font-size:22.5px;font-weight:700;color:#70788f;letter-spacing:-0.204px;transform:scale(0.9783,1.0000);transform-origin:0 19.05px;">ARRIVED</span>
<span class="t" style="left:2246.00px;top:1387.79px;font-size:47.5px;font-weight:400;color:#0f172a;letter-spacing:1.256px;-webkit-text-stroke:1.55px #0f172a;transform:scale(1.0619,1.0000);transform-origin:0 40.21px;">4520</span>
<span class="t" style="left:2261.80px;top:1458.95px;font-size:22.5px;font-weight:700;color:#808080;letter-spacing:-0.245px;transform:scale(0.9783,1.0000);transform-origin:0 19.05px;">LOGINS</span>
<span class="t" style="left:648.20px;top:1639.00px;font-size:28px;font-weight:400;color:#1e2330;letter-spacing:0.380px;transform:scale(1.0506,1.0000);transform-origin:0 23.70px;">Confirmed</span>
<span class="t" style="left:936.60px;top:1639.00px;font-size:28px;font-weight:400;color:#1e2330;letter-spacing:0.322px;transform:scale(1.0448,1.0000);transform-origin:0 23.70px;">Waiting for Approval</span>
<span class="t" style="left:647.20px;top:1696.80px;font-size:28px;font-weight:400;color:#1e2330;letter-spacing:0.320px;transform:scale(1.0408,1.0000);transform-origin:0 23.70px;">Not Responded</span>
<span class="t" style="left:934.60px;top:1696.80px;font-size:28px;font-weight:400;color:#1e2330;letter-spacing:0.435px;transform:scale(1.0709,1.0000);transform-origin:0 23.70px;">Not Attending</span>
<span class="t" style="left:1449.20px;top:1638.30px;font-size:28px;font-weight:400;color:#1e2330;letter-spacing:0.257px;transform:scale(1.0403,1.0000);transform-origin:0 23.70px;">Arrived</span>
<span class="t" style="left:1675.20px;top:1638.30px;font-size:28px;font-weight:400;color:#1e2330;letter-spacing:0.470px;transform:scale(1.0650,1.0000);transform-origin:0 23.70px;">Not Arrived</span>
<span class="t" style="left:2096.00px;top:1628.00px;font-size:28px;font-weight:400;color:#333333;letter-spacing:0.196px;transform:scale(1.0242,1.0000);transform-origin:0 23.70px;">iOS</span>
<span class="t" style="left:2270.60px;top:1628.00px;font-size:28px;font-weight:400;color:#333333;letter-spacing:0.385px;transform:scale(1.0383,1.0000);transform-origin:0 23.70px;">Android</span>
<span class="t" style="left:2498.00px;top:1628.00px;font-size:28px;font-weight:400;color:#333333;letter-spacing:0.900px;">Web</span>
</main>
</div>
</body></html>
